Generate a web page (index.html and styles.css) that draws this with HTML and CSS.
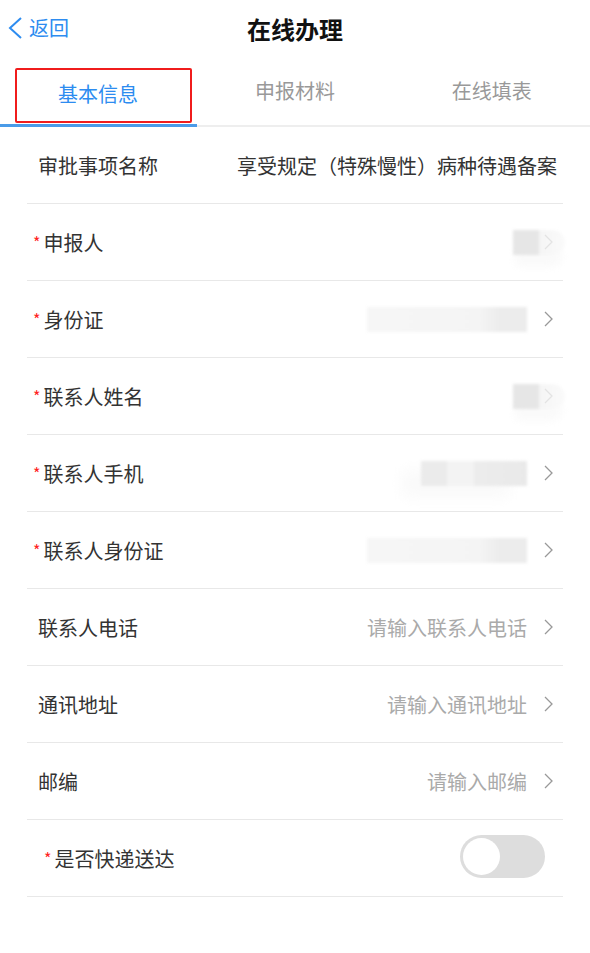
FILE: index.html
```html
<!DOCTYPE html>
<html lang="zh-CN">
<head>
    <meta charset="UTF-8">
    <meta name="viewport" content="width=device-width, initial-scale=1.0">
    <title>在线办理</title>
    <link rel="stylesheet" href="styles.css">
</head>
<body>
    <header class="topbar">
        <a class="back" href="#">
            <svg class="back-icon" width="16" height="22" viewBox="0 0 16 22">
                <polyline points="14,1 3,11 14,21" fill="none" stroke="#2d8cf0" stroke-width="2"/>
            </svg>
            <span>返回</span>
        </a>
        <h1 class="title">在线办理</h1>
    </header>

    <nav class="tabs">
        <div class="tab active"><span class="tab-mark">基本信息</span></div>
        <div class="tab">申报材料</div>
        <div class="tab">在线填表</div>
    </nav>

    <section class="form">
        <div class="row">
            <span class="label">审批事项名称</span>
            <span class="value plain">享受规定（特殊慢性）病种待遇备案</span>
        </div>
        <div class="row">
            <span class="label req">申报人</span>
            <span class="value"><span class="mask mask-short"></span></span>
            <svg class="chevron faint" width="9" height="16" viewBox="0 0 9 16"><polyline points="1,1 8,8 1,15"/></svg>
        </div>
        <div class="row">
            <span class="label req">身份证</span>
            <span class="value"><span class="mask mask-long"></span></span>
            <svg class="chevron" width="9" height="16" viewBox="0 0 9 16"><polyline points="1,1 8,8 1,15"/></svg>
        </div>
        <div class="row">
            <span class="label req">联系人姓名</span>
            <span class="value"><span class="mask mask-short"></span></span>
            <svg class="chevron faint" width="9" height="16" viewBox="0 0 9 16"><polyline points="1,1 8,8 1,15"/></svg>
        </div>
        <div class="row">
            <span class="label req">联系人手机</span>
            <span class="value"><span class="mask mask-mid"></span></span>
            <svg class="chevron" width="9" height="16" viewBox="0 0 9 16"><polyline points="1,1 8,8 1,15"/></svg>
        </div>
        <div class="row">
            <span class="label req">联系人身份证</span>
            <span class="value"><span class="mask mask-long"></span></span>
            <svg class="chevron" width="9" height="16" viewBox="0 0 9 16"><polyline points="1,1 8,8 1,15"/></svg>
        </div>
        <div class="row">
            <span class="label">联系人电话</span>
            <span class="value">请输入联系人电话</span>
            <svg class="chevron" width="9" height="16" viewBox="0 0 9 16"><polyline points="1,1 8,8 1,15"/></svg>
        </div>
        <div class="row">
            <span class="label">通讯地址</span>
            <span class="value">请输入通讯地址</span>
            <svg class="chevron" width="9" height="16" viewBox="0 0 9 16"><polyline points="1,1 8,8 1,15"/></svg>
        </div>
        <div class="row">
            <span class="label">邮编</span>
            <span class="value">请输入邮编</span>
            <svg class="chevron" width="9" height="16" viewBox="0 0 9 16"><polyline points="1,1 8,8 1,15"/></svg>
        </div>
        <div class="row">
            <span class="label req wide">是否快递送达</span>
            <span class="switch"><span class="knob"></span></span>
        </div>
    </section>
</body>
</html>
```

FILE: styles.css
```css
body {
    font-family: "Noto Sans CJK SC", "Noto Sans", sans-serif;
    margin: 0;
    background: #fff;
    color: #333;
}
.topbar {
    position: relative;
    height: 56px;
    display: flex;
    align-items: center;
    justify-content: center;
}
.back {
    position: absolute;
    left: 7px;
    top: 17px;
    display: flex;
    align-items: center;
    gap: 6px;
    color: #2d8cf0;
    font-size: 20px;
    text-decoration: none;
    line-height: 22px;
}
.title {
    margin: 0;
    font-size: 24px;
    font-weight: bold;
    color: #111;
}
.tabs {
    display: flex;
    height: 69px;
    border-bottom: 2px solid #eee;
}
.tab {
    flex: 1;
    display: flex;
    align-items: center;
    justify-content: center;
    font-size: 20px;
    color: #999;
}
.tab.active {
    color: #2d8cf0;
    border-bottom: 3px solid #4a9be8;
    margin-bottom: -2px;
    justify-content: flex-start;
    align-items: flex-start;
}
.tab-mark {
    box-sizing: border-box;
    width: 177px;
    height: 55px;
    margin: 12px 0 0 15px;
    padding: 0 11px 5px 0;
    border: 2px solid #f01c1c;
    border-radius: 2px;
    display: flex;
    align-items: center;
    justify-content: center;
}
.form {
    margin: 0 27px;
}
.row {
    height: 76px;
    display: flex;
    align-items: center;
    border-bottom: 1px solid #e8e8e8;
    font-size: 20px;
}
.label {
    padding-left: 11px;
    color: #333;
}
.label.req {
    padding-left: 6px;
}
.label.req::before {
    content: "*";
    color: #f22;
    font-size: 16px;
    margin-right: 3px;
    vertical-align: 2px;
}
.label.wide {
    padding-left: 17px;
}
.value {
    margin-left: auto;
    color: #aaa;
    display: flex;
    align-items: center;
}
.value.plain {
    color: #333;
    padding-right: 6px;
}
.chevron {
    margin: 0 10px 0 17px;
    fill: none;
    stroke: #999;
    stroke-width: 1.3;
}
.chevron.faint {
    opacity: 0.2;
    margin-left: -9px;
}
.mask {
    display: block;
    height: 25px;
    filter: blur(1.5px);
}
.mask-short {
    width: 52px;
    margin-right: -12px;
    background: linear-gradient(90deg, #e6e6e6 0, #e6e6e6 50%, #f5f5f5 50%, #fafafa 100%);
    border-radius: 0 14px 14px 0;
    box-shadow: 0 14px 10px -2px #fafafa;
}
.mask-long {
    width: 160px;
    background: linear-gradient(90deg, #f6f6f6 0, #f4f4f4 70%, #ececec 83%, #ececec 100%);
}
.mask-mid {
    width: 106px;
    background: linear-gradient(90deg, #ebebeb 0, #ebebeb 25%, #f3f3f3 25%, #f3f3f3 50%, #ececec 50%, #e9e9e9 100%);
    box-shadow: -18px 10px 16px 2px #fafafa;
}
.switch {
    margin: 0 18px 4px auto;
    width: 85px;
    height: 43px;
    border-radius: 22px;
    background: #ddd;
    display: flex;
    align-items: center;
    padding-left: 3px;
    box-sizing: border-box;
}
.knob {
    width: 37px;
    height: 37px;
    border-radius: 50%;
    background: #fff;
}
```
